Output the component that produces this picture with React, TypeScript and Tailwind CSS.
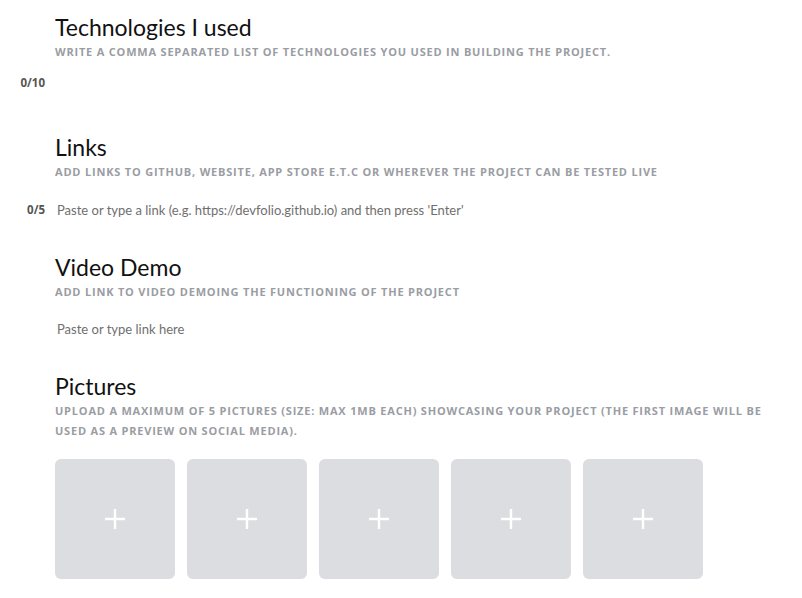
const headingCls = "text-[23px] leading-[28px] text-[#111] font-['Lato',sans-serif]";
const hintCls =
  "text-[11px] leading-[20px] font-bold uppercase tracking-[0.8px] text-[#9a9da3] font-['Open_Sans',sans-serif]";
const countCls = "text-[11.5px] font-bold text-[#555] font-['Open_Sans',sans-serif] text-right";
const inputCls =
  "w-full bg-transparent outline-none pl-[2px] text-[13px] text-[#333] placeholder:text-[#6f6f6f] font-['Lato',sans-serif]";

function Row({ count, children }: { count?: string; children?: React.ReactNode }) {
  return (
    <div className="grid grid-cols-[45px_1fr] gap-x-[10px] items-center">
      <div className={countCls}>{count}</div>
      <div>{children}</div>
    </div>
  );
}

function PlusTile() {
  return (
    <button className="w-[120px] h-[120px] rounded-[6px] bg-[#dcdde0] flex items-center justify-center">
      <svg width="20" height="20" viewBox="0 0 20 20">
        <path d="M10 0v20M0 10h20" stroke="#fff" strokeWidth="2.4" />
      </svg>
    </button>
  );
}

export default function App() {
  return (
    <div className="w-[802px] h-[598px] bg-white overflow-hidden pt-[13px]">
      <Row>
        <h2 className={headingCls}>Technologies I used</h2>
        <p className={`${hintCls} mt-[1px]`}>Write a comma separated list of technologies you used in building the project.</p>
      </Row>
      <div className="mt-[9px] h-[20px]">
        <Row count="0/10">
          <input className={`${inputCls} h-[20px]`} />
        </Row>
      </div>

      <div className="mt-[42px]">
        <Row>
          <h2 className={headingCls}>Links</h2>
          <p className={`${hintCls} mt-[1px]`}>Add links to Github, website, app store e.t.c or wherever the project can be tested live</p>
        </Row>
      </div>
      <div className="mt-[10px]">
        <Row count="0/5">
          <input
            className={`${inputCls} h-[36px]`}
            placeholder="Paste or type a link (e.g. https://devfolio.github.io) and then press 'Enter'"
          />
        </Row>
      </div>

      <div className="mt-[25px]">
        <Row>
          <h2 className={headingCls}>Video Demo</h2>
          <p className={`${hintCls} mt-[1px]`}>Add link to video demoing the functioning of the project</p>
        </Row>
      </div>
      <div className="mt-[9px]">
        <Row>
          <input className={`${inputCls} h-[36px]`} placeholder="Paste or type link here" />
        </Row>
      </div>

      <div className="mt-[25px]">
        <Row>
          <div className="w-[725px]">
            <h2 className={headingCls}>Pictures</h2>
            <p className={`${hintCls} mt-[1px]`}>
              Upload a maximum of 5 pictures (size: max 1mb each) showcasing your project (the first image will be used
              as a preview on social media).
            </p>
            <div className="mt-[18px] flex gap-[12px]">
              <PlusTile />
              <PlusTile />
              <PlusTile />
              <PlusTile />
              <PlusTile />
            </div>
          </div>
        </Row>
      </div>
    </div>
  );
}
